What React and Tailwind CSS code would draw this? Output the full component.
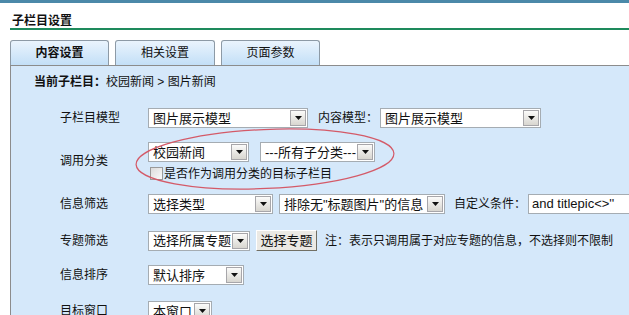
import React from "react";

const font = { fontFamily: '"Liberation Sans", "Noto Sans CJK SC", sans-serif' };

const Arrow = () => (
  <div className="w-[16px] h-[16px] shrink-0 border border-[#a7a6aa] bg-gradient-to-b from-[#fbfbfa] to-[#d8d6d0] flex items-center justify-center">
    <svg width="7" height="4" viewBox="0 0 7 4">
      <path d="M0 0h7L3.5 4z" fill="#111" />
    </svg>
  </div>
);

const Select = ({ w, children }) => (
  <div
    className={`${w} h-[20px] shrink-0 bg-white border border-[#a5acb2] flex items-center pl-[4px] pr-[1px] text-[13px] text-[#111]`}
  >
    <span className="flex-1 whitespace-nowrap overflow-hidden leading-none">{children}</span>
    <Arrow />
  </div>
);

const Label = ({ children }) => (
  <div className="w-[88px] shrink-0 text-[12px] text-[#111] whitespace-nowrap">{children}</div>
);

const App = () => {
  return (
    <div className="w-[629px] h-[315px] overflow-hidden bg-white relative" style={font}>
      <div className="h-[3px] bg-[#4b89a9]"></div>
      <div className="pl-[12px] pt-[11px] h-[25px] text-[12px] font-bold text-[#111] leading-[14px]">
        子栏目设置
      </div>
      <div className="ml-[10px] h-[2px] bg-[#1e8a5c]"></div>
      <div className="ml-[10px] mt-[10px] flex gap-[6px] h-[25px] items-end">
        <div className="w-[99px] h-[25px] border border-b-0 border-[#8d9aa6] rounded-t-[3px] bg-gradient-to-b from-[#eaf4fd] to-[#c3dff7] flex items-center justify-center text-[12px] font-bold text-[#111]">
          内容设置
        </div>
        <div className="w-[100px] h-[25px] border border-b-0 border-[#8d9aa6] rounded-t-[3px] bg-gradient-to-b from-[#eaf4fd] to-[#c3dff7] flex items-center justify-center text-[12px] text-[#111]">
          相关设置
        </div>
        <div className="w-[99px] h-[25px] border border-b-0 border-[#8d9aa6] rounded-t-[3px] bg-gradient-to-b from-[#eaf4fd] to-[#c3dff7] flex items-center justify-center text-[12px] text-[#111]">
          页面参数
        </div>
      </div>
      <div className="ml-[10px] h-[260px] border-t border-l border-[#8c8c8c] bg-[#d5e8fa] pt-[6px] flex flex-col">
        <div className="h-[20px] pl-[23px] flex items-center text-[12px] text-[#111]">
          <span className="font-bold">当前子栏目：</span>
          <span>校园新闻 &gt; 图片新闻</span>
        </div>

        <div className="mt-[16px] pl-[49px] flex items-center">
          <Label>子栏目模型</Label>
          <Select w="w-[160px]">图片展示模型</Select>
          <span className="ml-[10px] w-[62px] shrink-0 whitespace-nowrap text-[12px] text-[#111]">内容模型：</span>
          <Select w="w-[161px]">图片展示模型</Select>
        </div>

        <div className="mt-[14px] pl-[49px] flex items-center">
          <Label>调用分类</Label>
          <div className="flex flex-col">
            <div className="flex items-center gap-[11px]">
              <Select w="w-[101px]">校园新闻</Select>
              <Select w="w-[115px]">---所有子分类---</Select>
            </div>
            <div className="mt-[5px] h-[13px] flex items-center pl-[2px]">
              <div className="w-[13px] h-[13px] border border-[#9a9a9a] bg-gradient-to-br from-[#dcdcdc] to-[#fafafa]"></div>
              <span className="ml-[1px] text-[12px] text-[#111] whitespace-nowrap">是否作为调用分类的目标子栏目</span>
            </div>
          </div>
        </div>

        <div className="mt-[14px] pl-[49px] flex items-center">
          <Label>信息筛选</Label>
          <Select w="w-[125px]">选择类型</Select>
          <div className="ml-[6px] shrink-0">
            <Select w="w-[166px]">排除无"标题图片"的信息</Select>
          </div>
          <span className="ml-[9px] w-[74px] shrink-0 whitespace-nowrap text-[12px] text-[#111]">自定义条件：</span>
          <div className="w-[120px] h-[20px] shrink-0 bg-white border border-[#a5acb2] pl-[3px] flex items-center text-[13px] text-[#111] whitespace-nowrap">
            and titlepic&lt;&gt;''
          </div>
        </div>

        <div className="mt-[16px] pl-[49px] flex items-center">
          <Label>专题筛选</Label>
          <Select w="w-[102px]">选择所属专题</Select>
          <button className="ml-[6px] w-[61px] h-[21px] shrink-0 bg-[#ebe9e4] border border-t-[#fff] border-l-[#fff] border-r-[#716f64] border-b-[#716f64] text-[13px] text-[#111] leading-none">
            选择专题
          </button>
          <span className="ml-[8px] text-[12px] text-[#111] whitespace-nowrap">
            注：表示只调用属于对应专题的信息，不选择则不限制
          </span>
        </div>

        <div className="mt-[14px] pl-[49px] flex items-center">
          <Label>信息排序</Label>
          <Select w="w-[96px]">默认排序</Select>
        </div>

        <div className="mt-[16px] pl-[49px] flex items-center">
          <Label>目标窗口</Label>
          <Select w="w-[64px]">本窗口</Select>
        </div>
      </div>

      <svg className="absolute left-0 top-0 pointer-events-none" width="629" height="315">
        <ellipse
          cx="265"
          cy="159"
          rx="129"
          ry="29.5"
          transform="rotate(-2.5 265 159)"
          fill="none"
          stroke="#d45a68"
          strokeWidth="1.2"
        />
      </svg>
    </div>
  );
};

export default App;
